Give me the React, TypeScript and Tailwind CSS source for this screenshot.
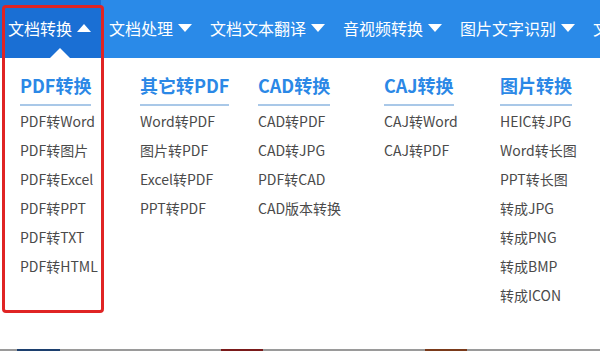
import React from "react";

const font = { fontFamily: '"Noto Sans CJK SC", "Noto Sans", sans-serif' };

function Tri({ up }: { up?: boolean }) {
  return (
    <svg width="14" height="8" viewBox="0 0 14 8" className="shrink-0">
      {up ? <polygon points="0,8 14,8 7,0" fill="#fff" /> : <polygon points="0,0 14,0 7,8" fill="#fff" />}
    </svg>
  );
}

const navItems = ["文档转换", "文档处理", "文档文本翻译", "音视频转换", "图片文字识别", "文档"];

const columns: { title: string; w: string; items: string[] }[] = [
  { title: "PDF转换", w: "w-[120px]", items: ["PDF转Word", "PDF转图片", "PDF转Excel", "PDF转PPT", "PDF转TXT", "PDF转HTML"] },
  { title: "其它转PDF", w: "w-[118px]", items: ["Word转PDF", "图片转PDF", "Excel转PDF", "PPT转PDF"] },
  { title: "CAD转换", w: "w-[126px]", items: ["CAD转PDF", "CAD转JPG", "PDF转CAD", "CAD版本转换"] },
  { title: "CAJ转换", w: "w-[116px]", items: ["CAJ转Word", "CAJ转PDF"] },
  { title: "图片转换", w: "w-[100px]", items: ["HEIC转JPG", "Word转长图", "PPT转长图", "转成JPG", "转成PNG", "转成BMP", "转成ICON"] },
];

export default function App() {
  return (
    <div className="relative w-[600px] h-[351px] overflow-hidden bg-white flex flex-col" style={font}>
      <div className="h-[58px] bg-[#2a8ae8] flex items-stretch shrink-0 whitespace-nowrap">
        {navItems.map((n, i) => (
          <div
            key={i}
            className={`relative flex items-center gap-[5px] pl-[8px] pr-[10px] pb-[2px] text-white text-[16px] shrink-0 ${i === 0 ? "bg-[#1a6fd4]" : ""}`}
          >
            <span>{n}</span>
            <Tri up={i === 0} />
            {i === 0 && (
              <div className="absolute left-[50px] bottom-0 w-0 h-0 border-l-[10px] border-r-[10px] border-b-[10px] border-l-transparent border-r-transparent border-b-white" />
            )}
          </div>
        ))}
      </div>
      <div className="flex-1 flex pl-[20px] pt-[15px]">
        {columns.map((c) => (
          <div key={c.title} className={`${c.w} shrink-0 flex flex-col items-start`}>
            <div className="text-[18px] leading-[24px] font-bold text-[#2b88e6] pb-[7px] border-b-2 border-[#a9c8e8] whitespace-nowrap">
              {c.title}
            </div>
            <div className="mt-[1px] flex flex-col">
              {c.items.map((it) => (
                <div key={it} className="h-[29px] leading-[29px] text-[14px] text-[#4a4a4a] whitespace-nowrap">
                  {it}
                </div>
              ))}
            </div>
          </div>
        ))}
      </div>
      <div className="h-[2px] bg-[#9a9a9a] shrink-0 flex">
        <div className="ml-[17px] w-[43px] bg-[#1c3f6e]" />
        <div className="ml-[161px] w-[42px] bg-[#7a1a1a]" />
        <div className="ml-[162px] w-[42px] bg-[#7a3a1a]" />
      </div>
      <div className="absolute left-[2px] top-[5px] w-[102px] h-[308px] border-[3px] border-[#e02424] rounded-[4px]" />
    </div>
  );
}
